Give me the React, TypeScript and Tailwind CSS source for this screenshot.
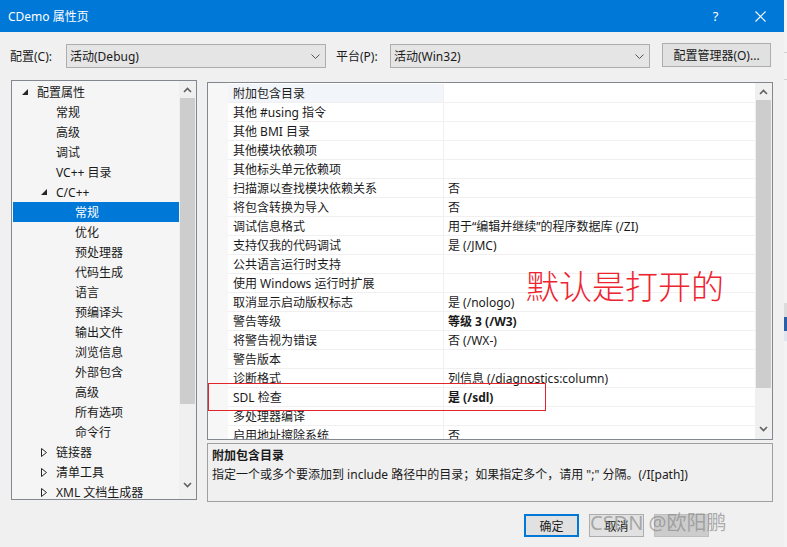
import React from "react";

const treeRows: { label: string; level: number; arrow?: "open" | "closed"; selected?: boolean }[] = [
  { label: "配置属性", level: 0, arrow: "open" },
  { label: "常规", level: 1 },
  { label: "高级", level: 1 },
  { label: "调试", level: 1 },
  { label: "VC++ 目录", level: 1 },
  { label: "C/C++", level: 1, arrow: "open" },
  { label: "常规", level: 2, selected: true },
  { label: "优化", level: 2 },
  { label: "预处理器", level: 2 },
  { label: "代码生成", level: 2 },
  { label: "语言", level: 2 },
  { label: "预编译头", level: 2 },
  { label: "输出文件", level: 2 },
  { label: "浏览信息", level: 2 },
  { label: "外部包含", level: 2 },
  { label: "高级", level: 2 },
  { label: "所有选项", level: 2 },
  { label: "命令行", level: 2 },
  { label: "链接器", level: 1, arrow: "closed" },
  { label: "清单工具", level: 1, arrow: "closed" },
  { label: "XML 文档生成器", level: 1, arrow: "closed" },
];

const indent = ["w-[9px]", "w-[28px]", "w-[47px]"];

const props: { name: string; value?: string; bold?: boolean }[] = [
  { name: "附加包含目录" },
  { name: "其他 #using 指令" },
  { name: "其他 BMI 目录" },
  { name: "其他模块依赖项" },
  { name: "其他标头单元依赖项" },
  { name: "扫描源以查找模块依赖关系", value: "否" },
  { name: "将包含转换为导入", value: "否" },
  { name: "调试信息格式", value: "用于“编辑并继续”的程序数据库 (/ZI)" },
  { name: "支持仅我的代码调试", value: "是 (/JMC)" },
  { name: "公共语言运行时支持" },
  { name: "使用 Windows 运行时扩展" },
  { name: "取消显示启动版权标志", value: "是 (/nologo)" },
  { name: "警告等级", value: "等级 3 (/W3)", bold: true },
  { name: "将警告视为错误", value: "否 (/WX-)" },
  { name: "警告版本" },
  { name: "诊断格式", value: "列信息 (/diagnostics:column)" },
  { name: "SDL 检查", value: "是 (/sdl)", bold: true },
  { name: "多处理器编译" },
  { name: "启用地址擦除系统", value: "否" },
];

function Chevron({ up }: { up?: boolean }) {
  return (
    <svg width="9" height="6" viewBox="0 0 9 6" className="text-[#606060]">
      <polyline
        points={up ? "1,5 4.5,1.5 8,5" : "1,1 4.5,4.5 8,1"}
        fill="none"
        stroke="currentColor"
        strokeWidth="1.6"
      />
    </svg>
  );
}

function Scrollbar({ thumb, down }: { thumb: string; down: string }) {
  return (
    <div className="w-[17px] h-full bg-[#f0f0f0] flex flex-col items-center">
      <div className="h-[17px] w-full flex items-center justify-center">
        <Chevron up />
      </div>
      <div className={`w-[15px] bg-[#cdcdcd] ${thumb}`} />
      <div className="flex-1" />
      <div className={`w-full flex items-center justify-center ${down}`}>
        <Chevron />
      </div>
    </div>
  );
}

function SelectBox({ text }: { text: string }) {
  return (
    <div className="w-[260px] h-[24px] bg-[#e5e5e5] border border-[#adadad] flex items-center pl-[3px] pr-[5px]">
      <span className="flex-1 pt-[2px]">{text}</span>
      <svg width="9" height="5" viewBox="0 0 9 5" className="text-[#555]">
        <polyline points="0.5,0.5 4.5,4.5 8.5,0.5" fill="none" stroke="currentColor" strokeWidth="1" />
      </svg>
    </div>
  );
}

export default function App() {
  return (
    <div className="w-[787px] h-[547px] flex bg-[#f3f3f3] overflow-hidden font-['Noto_Sans','Noto_Sans_CJK_SC',sans-serif] text-[12px] text-[#1a1a1a] leading-none">
      <div className="relative w-[784px] h-[547px] bg-[#f0f0f0] flex flex-col">
        {/* Title bar */}
        <div className="h-[32px] bg-[#0078d7] flex items-center text-white">
          <span className="pl-[8px] flex-1 text-[12px] pt-[1px]">CDemo 属性页</span>
          <span className="w-[46px] text-center text-[13px] pl-[3px]">?</span>
          <div className="w-[46px] flex items-center justify-center mr-[1px]">
            <svg width="11" height="11" viewBox="0 0 11 11">
              <path d="M0.5 0.5 L10.5 10.5 M10.5 0.5 L0.5 10.5" stroke="white" strokeWidth="1.1" />
            </svg>
          </div>
        </div>

        {/* Config row */}
        <div className="flex items-center pt-[12px] pl-[10px]">
          <span className="w-[56px] pt-[2px]">配置(C):</span>
          <SelectBox text="活动(Debug)" />
          <span className="ml-[10px] w-[54px] pt-[2px]">平台(P):</span>
          <SelectBox text="活动(Win32)" />
          <div className="ml-[12px] w-[109px] h-[24px] -mt-[2px] pt-[2px] bg-[#e1e1e1] border border-[#adadad] flex items-center justify-center">
            配置管理器(O)...
          </div>
        </div>

        {/* Main area */}
        <div className="flex mt-[12px] pl-[11px]">
          {/* Tree */}
          <div className="w-[186px] h-[420px] border border-[#828790] bg-[#f5f5f5] flex overflow-hidden">
            <div className="flex-1 pl-[1px] pt-[1px] overflow-hidden">
              {treeRows.map((r, i) => (
                <div
                  key={i}
                  className={`h-[20px] flex items-center ${r.selected ? "bg-[#0078d7] text-white" : ""}`}
                >
                  <span className={indent[r.level]} />
                  <span className="w-[15px] flex items-center">
                    {r.arrow === "open" && (
                      <svg width="6" height="6" viewBox="0 0 6 6">
                        <polygon points="6,0 6,6 0,6" fill="#262626" />
                      </svg>
                    )}
                    {r.arrow === "closed" && (
                      <svg width="6" height="9" viewBox="0 0 6 9">
                        <polygon points="0.5,0.5 5.5,4.5 0.5,8.5" fill="none" stroke="#262626" strokeWidth="1" />
                      </svg>
                    )}
                  </span>
                  <span className="pt-[2px]">{r.label}</span>
                </div>
              ))}
            </div>
            <Scrollbar thumb="h-[306px]" down="h-[20px] mb-[4px]" />
          </div>

          {/* Right column */}
          <div className="ml-[10px] mt-[2px] w-[566px] flex flex-col">
            <div className="h-[358px] border border-[#828790] bg-white flex overflow-hidden">
              <div className="w-[20px] bg-[#f7f7f7]" />
              <div className="flex-1 overflow-hidden pt-[1px]">
                {props.map((p, i) => (
                  <div key={i} className="h-[19px] flex border-b border-[#f0f0f0]">
                    <div
                      className={`w-[215px] flex items-center pl-[5px] pt-[2px] ${i === 0 ? "bg-[#f2f5f9]" : ""}`}
                    >
                      {p.name}
                    </div>
                    <div className={`flex-1 flex items-center pl-[4px] pt-[2px] border-l border-[#f0f0f0] ${p.bold ? "font-bold" : ""}`}>
                      {p.value ?? ""}
                    </div>
                  </div>
                ))}
              </div>
              <Scrollbar thumb="h-[288px]" down="h-[17px] mb-[2px]" />
            </div>

            {/* Description */}
            <div className="mt-[3px] h-[59px] border border-[#a0a0a0] bg-[#f0f0f0] pl-[4px] pt-[6px]">
              <div className="font-bold h-[13px]">附加包含目录</div>
              <div className="mt-[6px]">
                指定一个或多个要添加到 include 路径中的目录；如果指定多个，请用 ";" 分隔。(/I[path])
              </div>
            </div>
          </div>
        </div>

        {/* Buttons */}
        <div className="flex justify-end gap-[10px] mt-[12px] pr-[75px]">
          <div className="w-[55px] h-[23px] pt-[2px] bg-[#e1e1e1] border-2 border-[#0078d7] flex items-center justify-center">
            确定
          </div>
          <div className="w-[55px] h-[23px] pt-[2px] bg-[#e1e1e1] border border-[#adadad] flex items-center justify-center">
            取消
          </div>
          <div className="w-[55px] h-[23px] bg-[#cccccc] border border-[#bfbfbf]" />
        </div>

        {/* Annotations */}
        <div className="absolute left-[208px] top-[383px] w-[338px] h-[28px] border border-[#e0262a]" />
        <div className="absolute left-[526px] top-[269px] text-[33px] font-light text-[#ee2530] font-['Noto_Sans_CJK_SC',serif]">
          默认是打开的
        </div>
        <div className="absolute left-[590px] top-[513px] text-[20px] text-[#8c8c8c]/70 font-['Noto_Sans','Noto_Sans_CJK_SC',sans-serif]">
          CSDN @欧阳鹏
        </div>
      </div>
      {/* strip of the desktop behind */}
      <div className="flex-1 flex flex-col">
        <div className="h-[52px]" />
        <div className="h-[1px] bg-[#d0d0d0]" />
        <div className="h-[26px]" />
        <div className="h-[1px] bg-[#d0d0d0]" />
        <div className="h-[223px]" />
        <div className="h-[14px] bg-[#dcdcdc]" />
        <div className="h-[14px] bg-[#2b5fa8]" />
        <div className="h-[10px] bg-[#dfe6ef]" />
      </div>
    </div>
  );
}
